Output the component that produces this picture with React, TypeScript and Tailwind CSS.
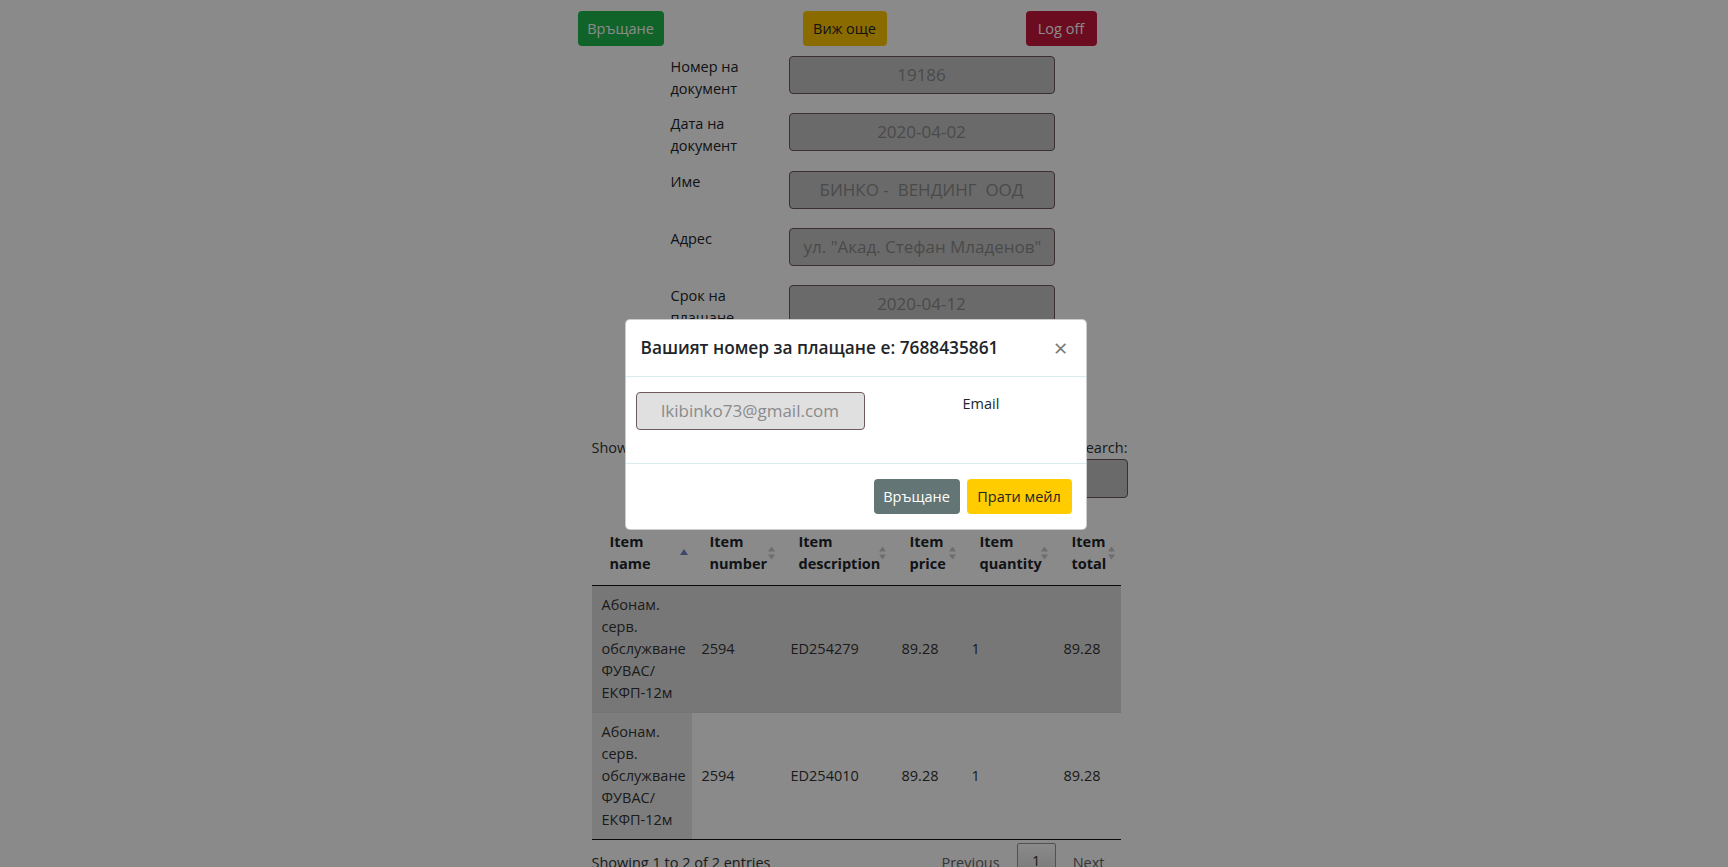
import React from "react";

const font = "font-['Open_Sans',sans-serif]";

function SortBoth() {
  return (
    <svg width="7" height="13" viewBox="0 0 7 13" className="absolute right-[6px] top-1/2 -translate-y-1/2">
      <polygon points="3.5,0 7,5 0,5" fill="#c9c9c9" />
      <polygon points="0,8 7,8 3.5,13" fill="#c9c9c9" />
    </svg>
  );
}

function SortAsc() {
  return (
    <svg width="8" height="6" viewBox="0 0 8 6" className="absolute right-[4px] top-[28px]">
      <polygon points="4,0 8,6 0,6" fill="#6f86c8" />
    </svg>
  );
}

function FormRow({ label, value, h }: { label: React.ReactNode; value: string; h: string }) {
  return (
    <div className={`flex pl-[93px] ${h}`}>
      <div className="w-[118px] text-[14.5px] leading-[22px] text-[#212529]">{label}</div>
      <div className="w-[266px] h-[38px] rounded-[4px] border border-[#6e5858] bg-[#c4c4c4] flex items-center justify-center overflow-hidden whitespace-pre text-[17px] text-[#8a8a8a]">
        {value}
      </div>
    </div>
  );
}

const rows = [
  { num: "2594", desc: "ED254279", price: "89.28", qty: "1", total: "89.28", striped: true },
  { num: "2594", desc: "ED254010", price: "89.28", qty: "1", total: "89.28", striped: false },
];

export default function App() {
  return (
    <div className={`relative h-[867px] w-full overflow-hidden bg-white ${font} text-[#212529]`}>
      <div className="pr-[17px]">
        <div className="mx-auto w-[556px] pt-[11px]">
          {/* top buttons */}
          <div className="flex w-[519px] justify-between text-[14.5px]">
            <button className="h-[35px] w-[86px] rounded-[4px] bg-[#1fb84d] text-white">Връщане</button>
            <button className="h-[35px] w-[84px] rounded-[4px] bg-[#ffc600] text-[#212529]">Виж още</button>
            <button className="h-[35px] w-[71px] rounded-[4px] bg-[#c6173b] text-white">Log off</button>
          </div>

          {/* form */}
          <div className="mt-[10px]">
            <FormRow h="h-[57px]" label={<>Номер на<br />документ</>} value="19186" />
            <FormRow h="h-[58px]" label={<>Дата на<br />документ</>} value="2020-04-02" />
            <FormRow h="h-[57px]" label="Име" value="БИНКО -  ВЕНДИНГ  ООД" />
            <div className="flex pl-[93px] h-[57px]">
              <div className="w-[118px] text-[14.5px] leading-[22px]">Адрес</div>
              <div className="w-[266px] h-[38px] rounded-[4px] border border-[#6e5858] bg-[#c4c4c4] flex items-center overflow-hidden whitespace-nowrap text-[17px] text-[#8a8a8a] pl-[14px]">
                ул. "Акад. Стефан Младенов"
              </div>
            </div>
            <FormRow h="h-[57px]" label={<>Срок на<br />плащане</>} value="2020-04-12" />
            <FormRow h="h-[57px]" label="Сума" value="89.28" />
          </div>

          {/* datatable */}
          <div className="ml-[14px] w-[536px] mt-[38px] text-[14.5px] leading-[22px] text-[#333]">
            <div className="flex justify-between">
              <div className="flex items-start gap-[4px]">
                <span>Show</span>
                <span className="h-[30px] w-[60px] rounded-[3px] border border-[#aaa] px-1">10</span>
                <span>entries</span>
              </div>
              <div className="flex flex-col items-end">
                <span>Search:</span>
                <div className="h-[39px] w-[180px] rounded-[4px] border border-[#6e5858] bg-[#c4c4c4]" />
              </div>
            </div>

            <table className="mt-[23px] w-[529px] table-fixed border-collapse">
              <colgroup>
                <col className="w-[100px]" />
                <col className="w-[89px]" />
                <col className="w-[111px]" />
                <col className="w-[70px]" />
                <col className="w-[92px]" />
                <col className="w-[67px]" />
              </colgroup>
              <thead>
                <tr className="border-b border-[#111] text-left font-bold text-[#212529]">
                  <th className="relative h-[64px] pl-[18px] pr-[10px] text-left align-middle">Item<br />name<SortAsc /></th>
                  <th className="relative pl-[18px] pr-[10px] text-left align-middle">Item<br />number<SortBoth /></th>
                  <th className="relative pl-[18px] pr-[10px] text-left align-middle">Item<br />description<SortBoth /></th>
                  <th className="relative pl-[18px] pr-[10px] text-left align-middle">Item<br />price<SortBoth /></th>
                  <th className="relative pl-[18px] pr-[10px] text-left align-middle">Item<br />quantity<SortBoth /></th>
                  <th className="relative pl-[18px] pr-[10px] text-left align-middle">Item<br />total<SortBoth /></th>
                </tr>
              </thead>
              <tbody>
                {rows.map((r, i) => (
                  <tr key={i} className={`${i > 0 ? "border-t border-[#d8d8d8]" : ""} ${r.striped ? "bg-[#dcdcdc]" : "bg-white"}`}>
                    <td className={`px-[10px] py-[8px] align-middle ${r.striped ? "" : "bg-[#e8e8e8]"}`}>
                      Абонам.<br />серв.<br />обслужване<br />ФУВАС/<br />ЕКФП-12м
                    </td>
                    <td className="px-[10px] py-[8px] align-middle">{r.num}</td>
                    <td className="px-[10px] py-[8px] align-middle">{r.desc}</td>
                    <td className="px-[10px] py-[8px] align-middle">{r.price}</td>
                    <td className="px-[10px] py-[8px] align-middle">{r.qty}</td>
                    <td className="px-[10px] py-[8px] align-middle">{r.total}</td>
                  </tr>
                ))}
                <tr className="border-t border-[#111]"><td colSpan={6} className="h-0 p-0" /></tr>
              </tbody>
            </table>

            <div className="flex w-[529px] justify-between">
              <div className="pt-[12px]">Showing 1 to 2 of 2 entries</div>
              <div className="flex items-start gap-[3px] pt-[3px] pr-[2px]">
                <span className="px-[14px] pt-[9px] text-[#666]">Previous</span>
                <span className="flex h-[36px] w-[39px] items-center justify-center rounded-[2px] border border-[#979797] bg-gradient-to-b from-white to-[#dcdcdc]">1</span>
                <span className="px-[14px] pt-[9px] text-[#666]">Next</span>
              </div>
            </div>
          </div>
        </div>
      </div>

      {/* backdrop */}
      <div className="absolute inset-0 bg-[rgba(0,0,0,0.46)]" />

      {/* modal */}
      <div className="absolute inset-0 flex justify-center pr-[17px] pt-[319px]">
        <div className="h-fit w-[462px] rounded-[5px] border border-[rgba(0,0,0,0.2)] bg-white">
          <div className="flex items-center justify-between border-b border-[#d8ecee] px-[15px] h-[57px]">
            <h5 className="whitespace-nowrap text-[17.3px] font-semibold leading-[24px] text-[#212529]">Вашият номер за плащане е: 7688435861</h5>
            <span className="mr-[3px] text-[24px] font-normal leading-[24px] text-[#7a7a7a]">×</span>
          </div>
          <div className="flex items-start pl-[10px] pt-[15px] pb-[33px]">
            <div className="flex h-[38px] w-[229px] items-center justify-center rounded-[4px] border border-[#6e5a5a] bg-[#e0e0e0] text-[17px] text-[#8a8a8a]">
              lkibinko73@gmail.com
            </div>
            <span className="ml-[98px] mt-[1px] text-[14.5px] leading-[22px] text-[#212529]">Email</span>
          </div>
          <div className="flex justify-end gap-[7px] border-t border-[#d8ecee] py-[15px] pr-[14px]">
            <button className="h-[35px] w-[86px] rounded-[4px] bg-[#637675] text-[14.5px] text-white">Връщане</button>
            <button className="h-[35px] w-[105px] rounded-[4px] bg-[#ffcc00] text-[14.5px] text-[#212529]">Прати мейл</button>
          </div>
        </div>
      </div>
    </div>
  );
}
